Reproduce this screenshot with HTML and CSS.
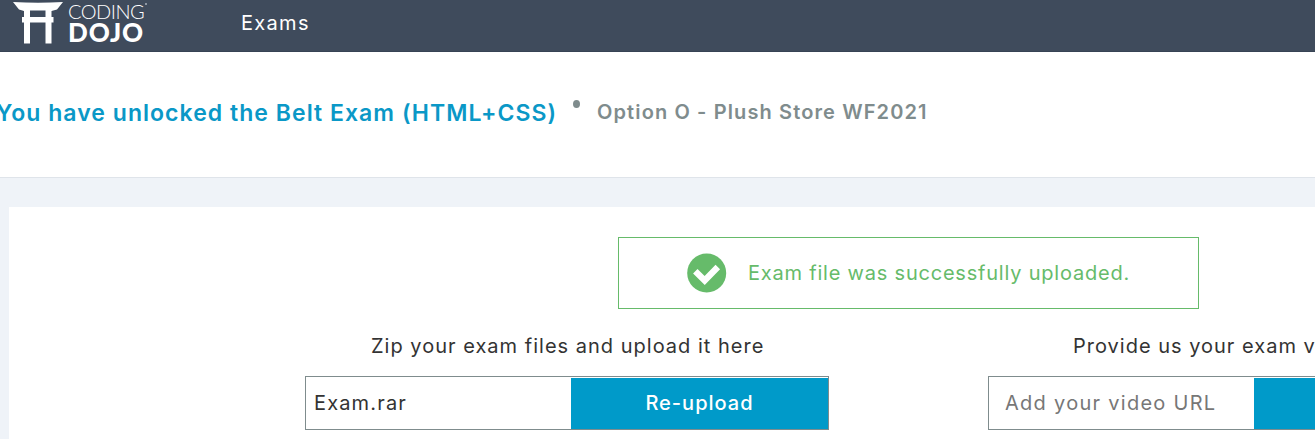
FILE: index.html
```html
<!DOCTYPE html>
<html lang="en">
<head>
<meta charset="utf-8">
<title>Exams</title>
<link rel="stylesheet" href="styles.css">
</head>
<body>
<header class="topbar">
  <a class="brand">
    <svg class="gate" width="50" height="43" viewBox="0 0 50 43" fill="#fff" aria-hidden="true">
      <path d="M0 0Q25 1.500 50 0L44 7.500L38.500 9V15H40.500V20.500H38.500V41.500H32.500V20.500H17V41.500H11V20.500H9V15H11V9L6 7.500ZM17 8.500V15H32.500V8.500Z" fill-rule="evenodd"/>
    </svg>
    <span class="wordmark"><span class="coding">CODING<i class="reg"></i></span><span class="dojo">DOJO</span></span>
  </a>
  <nav class="nav"><span class="t-nav">Exams</span></nav>
</header>
<section class="heading">
  <span class="t-title">You have unlocked the Belt Exam (HTML+CSS)</span>
  <i class="dot"></i>
  <span class="t-option">Option O - Plush Store WF2021</span>
</section>
<main class="panel">
  <div class="alert">
    <svg class="check" width="40" height="40" viewBox="0 0 40 40" aria-hidden="true">
      <circle cx="19.700" cy="20" r="19.500" fill="#66bb6a"/>
      <path d="M8.300 18.200L17.700 27.500L30.800 14" fill="none" stroke="#fff" stroke-width="6.300" stroke-linejoin="miter"/>
    </svg>
    <span class="t-alert">Exam file was successfully uploaded.</span>
  </div>
  <div class="forms">
    <div class="form">
      <div class="label"><span class="t-label">Zip your exam files and upload it here</span></div>
      <div class="control">
        <div class="value"><span class="t-file">Exam.rar</span></div>
        <div class="button"><span class="t-button">Re-upload</span></div>
      </div>
    </div>
    <div class="form">
      <div class="label label-video"><span class="t-video">Provide us your exam video URL here</span></div>
      <div class="control">
        <div class="value placeholder"><span class="t-url">Add your video URL</span></div>
        <div class="button"></div>
      </div>
    </div>
  </div>
</main>
</body>
</html>
```
FILE: styles.css
```css
* { box-sizing: border-box; }
body {
  margin: 0;
  width: 1315px;
  height: 439px;
  overflow: hidden;
  display: flex;
  flex-direction: column;
  background: #eff3f8;
  color: #333;
  font: 20px/28px Inter, "Liberation Sans", sans-serif;
  white-space: nowrap;
}
.topbar {
  height: 52px;
  flex: none;
  display: flex;
  background: #3f4b5c;
  border-bottom: 1px solid #374354;
  color: #fff;
}
.brand { width: 241px; padding: 2px 0 0 13px; display: flex; gap: 5px; }
.wordmark { display: flex; flex-direction: column; font-family: Lato, sans-serif; }
.coding { height: 19px; font-size: 20px; line-height: 19px; font-weight: 300; letter-spacing: -0.5px; display: flex; gap: 1px; }
.reg { width: 2px; height: 2px; margin-top: 1px; border-radius: 50%; background: #aab1bb; }
.dojo { font-size: 26px; line-height: 23px; font-weight: 900; letter-spacing: 0.9px; }
.nav { padding-top: 9px; }
.heading {
  height: 126px;
  flex: none;
  display: flex;
  padding-top: 46px;
  background: #fff;
  border-bottom: 1px solid #dfe4ea;
  font-weight: 500;
}
.t-title { margin-left: -4px; width: 577px; font-size: 23px; line-height: 30px; font-weight: 600; color: #0a98c7; letter-spacing: 1.04px; }
.dot { width: 7px; height: 8px; margin-top: 2px; border-radius: 50%; background: #7f8c8d; }
.t-option { margin-left: 17px; color: #7f8c8d; font-weight: 600; letter-spacing: 1.12px; }
.panel { margin: 29px 0 0 9px; flex: 1; padding-top: 30px; background: #fff; }
.alert {
  width: 581px;
  height: 72px;
  margin-left: 609px;
  padding: 0 0 0 68px;
  display: flex;
  align-items: center;
  gap: 21px;
  border: 1px solid #66bb6a;
  color: #66bb6a;
}
.t-alert { letter-spacing: 0.79px; }
.forms { display: flex; gap: 159px; margin: 23px 0 0 296px; }
.form { width: 524px; flex: none; }
.label { height: 44px; padding-left: 66px; }
.label-video { padding-left: 85px; }
.control { height: 54px; display: flex; border: 1px solid #7f8c8d; }
.value { width: 265px; padding: 12px 0 0 8px; }
.placeholder { padding-left: 16px; color: #777; }
.button { flex: 1; margin-top: 1px; padding-top: 11px; background: #009ac9; color: #fff; font-weight: 500; text-align: center; }
.t-label { letter-spacing: 1.01px; }
.t-video, .t-button { letter-spacing: 1px; }
.t-nav { letter-spacing: 1.3px; }
.t-file { letter-spacing: 1.15px; }
.t-url { letter-spacing: 1.28px; }
```
